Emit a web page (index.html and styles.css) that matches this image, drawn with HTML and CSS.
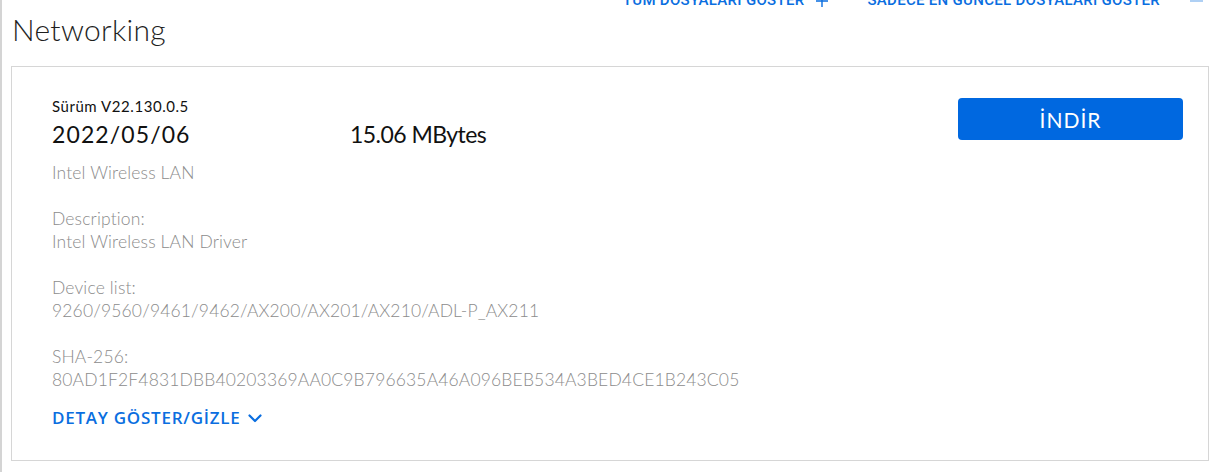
FILE: index.html
```html
<!DOCTYPE html>
<html lang="tr">
<head>
<meta charset="utf-8">
<title>Networking</title>
<link rel="stylesheet" href="styles.css">
</head>
<body>
<div class="page">
  <nav class="file-links">
    <a class="file-link" href="#">TÜM DOSYALARI GÖSTER
      <svg class="sign" width="12" height="12" viewBox="0 0 12 12"><path d="M0 6 H12 M6 0 V12" stroke="currentColor" stroke-width="1.4" fill="none"/></svg>
    </a>
    <a class="file-link" href="#">SADECE EN GÜNCEL DOSYALARI GÖSTER
      <svg class="sign minus" width="13" height="12" viewBox="0 0 13 12"><path d="M0 6 H13" stroke="currentColor" stroke-width="1.4" fill="none"/></svg>
    </a>
  </nav>
  <h2 class="section-title">Networking</h2>
  <div class="card">
    <div class="info">
      <div class="version">Sürüm V22.130.0.5</div>
      <div class="meta">
        <div class="date">2022/05/06</div>
        <div class="size">15.06 MBytes</div>
      </div>
      <div class="field">Intel Wireless LAN</div>
      <div class="field">Description:<br>Intel Wireless LAN Driver</div>
      <div class="field">Device list:<br>9260/9560/9461/9462/AX200/AX201/AX210/ADL-P_AX211</div>
      <div class="field">SHA-256:<br>80AD1F2F4831DBB40203369AA0C9B796635A46A096BEB534A3BED4CE1B243C05</div>
      <a class="toggle" href="#">DETAY GÖSTER/GİZLE
        <svg class="chev" width="14" height="9" viewBox="0 0 14 9"><path d="M1.5 1.5 L7 7 L12.5 1.5" fill="none" stroke="currentColor" stroke-width="2.2" stroke-linecap="round" stroke-linejoin="round"/></svg>
      </a>
    </div>
    <a class="download" href="#">İNDİR</a>
  </div>
</div>
</body>
</html>
```
FILE: styles.css
```css
html, body {
  margin: 0;
  padding: 0;
  background: #fff;
  overflow: hidden;
}
body {
  font-family: "Lato", "Noto Sans", sans-serif;
  color: #1a1a1a;
}
.page {
  border-left: 2px solid #d4d4d4;
  height: 472px;
  box-sizing: border-box;
  padding: 0 14px 0 9px;
}
.file-links {
  display: flex;
  justify-content: flex-end;
  align-items: flex-end;
  gap: 39px;
  height: 9px;
  overflow: hidden;
  padding-right: 6px;
}
.file-link {
  display: flex;
  align-items: center;
  font-family: "Roboto", sans-serif;
  font-weight: 500;
  font-size: 15px;
  line-height: 18px;
  color: #0a6ee0;
  text-decoration: none;
  letter-spacing: 0.3px;
}
.sign {
  margin-left: 12px;
  margin-top: 2px;
}
.sign.minus {
  margin-left: 30px;
  color: #8dbcf0;
}
.section-title {
  margin: 2px 0 19px 1px;
  font-weight: 300;
  font-size: 30px;
  line-height: 36px;
  letter-spacing: 0.3px;
  color: #1e1e1e;
}
.card {
  border: 1px solid #d6d6d6;
  display: flex;
  justify-content: space-between;
  align-items: flex-start;
  padding: 30px 25px 0 40px;
  height: 395px;
  box-sizing: border-box;
}
.info {
  display: flex;
  flex-direction: column;
}
.version {
  font-size: 15px;
  line-height: 18px;
  letter-spacing: 0.55px;
  color: #111;
}
.meta {
  display: flex;
  margin-top: 5px;
  font-size: 23px;
  line-height: 28px;
  color: #111;
}
.date {
  width: 298px;
  letter-spacing: 1.1px;
}
.size {
  letter-spacing: -0.55px;
}
.field {
  margin-top: 13px;
  font-size: 17.5px;
  line-height: 23px;
  letter-spacing: 0.15px;
  color: #8c8c8c;
  font-weight: 300;
}
.field + .field {
  margin-top: 23px;
}
.toggle {
  margin-top: 17px;
  display: flex;
  align-items: center;
  gap: 8px;
  font-family: "Open Sans", sans-serif;
  font-weight: 600;
  font-size: 17px;
  line-height: 20px;
  letter-spacing: 0.75px;
  color: #0a6ee0;
  text-decoration: none;
}
.chev {
  margin-top: 1px;
}
.download {
  margin-top: 1px;
  width: 225px;
  height: 42px;
  border-radius: 4px;
  background: #0068e0;
  color: #fff;
  display: flex;
  align-items: center;
  justify-content: center;
  font-size: 21px;
  font-weight: 400;
  letter-spacing: 1px;
  text-decoration: none;
}
```
